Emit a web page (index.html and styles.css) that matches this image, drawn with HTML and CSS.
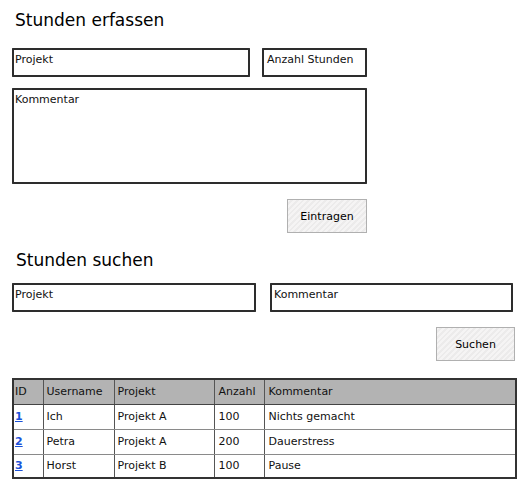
FILE: index.html
```html
<!DOCTYPE html>
<html lang="de">
<head>
<meta charset="utf-8">
<title>Stunden erfassen</title>
<link rel="stylesheet" href="styles.css">
</head>
<body>
<div class="page">
  <h2 class="title">Stunden erfassen</h2>
  <div class="form-a">
    <div class="row">
      <div class="field f-projekt">Projekt</div>
      <div class="field f-anzahl">Anzahl Stunden</div>
    </div>
    <div class="field area">Kommentar</div>
    <div class="btn-row">
      <div class="btn b-eintragen">Eintragen</div>
    </div>
  </div>

  <h2 class="title title-2">Stunden suchen</h2>
  <div class="form-b">
    <div class="row row-b">
      <div class="field f-sprojekt">Projekt</div>
      <div class="field f-skommentar">Kommentar</div>
    </div>
    <div class="btn-row">
      <div class="btn b-suchen">Suchen</div>
    </div>
    <table class="grid">
      <colgroup>
        <col class="c-id"><col class="c-user"><col class="c-proj"><col class="c-anz"><col class="c-kom">
      </colgroup>
      <thead>
        <tr><th>ID</th><th>Username</th><th>Projekt</th><th>Anzahl</th><th>Kommentar</th></tr>
      </thead>
      <tbody>
        <tr><td><a href="#">1</a></td><td>Ich</td><td>Projekt A</td><td>100</td><td>Nichts gemacht</td></tr>
        <tr><td><a href="#">2</a></td><td>Petra</td><td>Projekt A</td><td>200</td><td>Dauerstress</td></tr>
        <tr class="last"><td><a href="#">3</a></td><td>Horst</td><td>Projekt B</td><td>100</td><td>Pause</td></tr>
      </tbody>
    </table>
  </div>
</div>
</body>
</html>
```
FILE: styles.css
```css
* { box-sizing: border-box; }
html, body { margin: 0; padding: 0; background: #fff; }
body {
  font-family: "Comic Sans MS", "DejaVu Sans", sans-serif;
  font-size: 11px;
  color: #111;
}
.page {
  padding: 10px 0 0 12px;
  display: flex;
  flex-direction: column;
}
.title {
  margin: 0;
  padding-left: 3px;
  font-size: 17px;
  font-weight: normal;
  line-height: 20px;
  height: 20px;
  color: #000;
}
.title-2 { margin-top: 17px; padding-left: 4px; }

.form-a {
  width: 355px;
  margin-top: 18px;
  display: flex;
  flex-direction: column;
}
.form-b {
  width: 503px;
  margin-top: 13px;
  display: flex;
  flex-direction: column;
}
.row { display: flex; gap: 12px; }
.row-b { gap: 14px; }

.field {
  height: 29px;
  border: 2px solid #2d2d2d;
  border-radius: 1px;
  padding: 3px 1px;
  line-height: 14px;
  background: #fff;
  box-shadow: 0 0 0.6px #555;
}
.f-projekt { width: 238px; }
.f-anzahl { width: 105px; padding-left: 3px; }
.area { margin-top: 11px; height: 96px; width: 355px; }
.f-sprojekt { width: 244px; }
.f-skommentar { width: 243px; padding-left: 2px; }

.btn-row {
  display: flex;
  justify-content: flex-end;
  margin-top: 15px;
}
.btn {
  height: 34px;
  border: 1px solid #b0b0b0;
  background: repeating-linear-gradient(135deg, #f5f4f4 0 2px, #ecebeb 2px 4px);
  display: flex;
  align-items: center;
  justify-content: center;
  color: #000;
}
.b-eintragen { width: 80px; }
.b-suchen { width: 79px; }

.grid {
  margin-top: 17px;
  width: 503px;
  border-collapse: collapse;
  table-layout: fixed;
  border: 2px solid #333;
}
.c-id { width: 30px; }
.c-user { width: 71px; }
.c-proj { width: 100px; }
.c-anz { width: 50px; }
.c-kom { width: 252px; }
.grid th, .grid td {
  height: 25px;
  padding: 0 0 0 3px;
  text-align: left;
  font-weight: normal;
  border-left: 1px solid #555;
  border-bottom: 1px solid #8a8a8a;
  white-space: nowrap;
  overflow: hidden;
}
.grid th:first-child, .grid td:first-child { padding-left: 1px; border-left: none; }
.grid th:nth-child(4), .grid td:nth-child(4) { padding-left: 4px; }
.grid th:nth-child(5), .grid td:nth-child(5) { padding-left: 4px; }
.grid thead th {
  background: #b3b3b3;
  border-bottom: 1px solid #444;
}
.grid tr.last td { height: 24px; border-bottom: none; }
.grid a { color: #1a52d9; font-weight: bold; text-decoration: underline; }
```
